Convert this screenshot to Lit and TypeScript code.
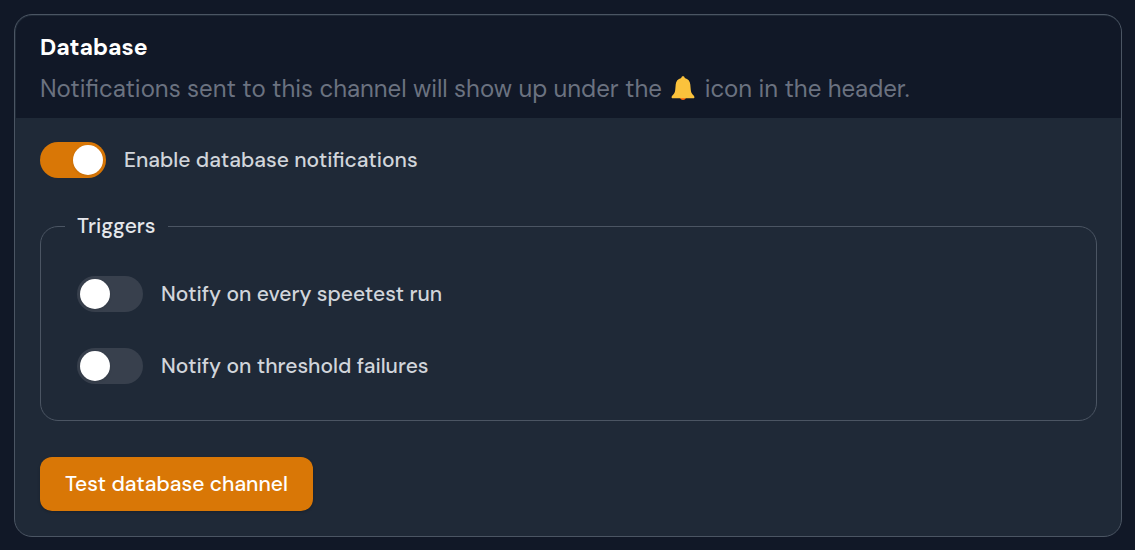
import { LitElement, html, css } from "lit";
import { customElement, property } from "lit/decorators.js";

@customElement("toggle-field")
class ToggleField extends LitElement {
  @property() label = "";
  @property({ type: Boolean }) checked = false;

  static styles = css`
    :host {
      display: block;
    }
    .field {
      display: flex;
      align-items: center;
      gap: 18px;
      min-height: 36px;
      color: #d1d5db;
      font-size: 21px;
      font-weight: 500;
      line-height: 30px;
      cursor: pointer;
    }
    .switch {
      appearance: none;
      box-sizing: border-box;
      display: flex;
      flex: none;
      width: 66px;
      height: 36px;
      margin: 0;
      padding: 3px;
      border-radius: 18px;
      background: #38404d;
      cursor: pointer;
    }
    .switch::before {
      content: "";
      width: 30px;
      height: 30px;
      border-radius: 50%;
      background: #fff;
      box-shadow: 0 1px 3px rgb(0 0 0 / 0.1);
    }
    .switch:checked {
      justify-content: flex-end;
      background: #d97706;
    }
    .switch:focus-visible {
      outline: 2px solid #f59e0b;
      outline-offset: 2px;
    }
  `;

  render() {
    return html`
      <label class="field">
        <input
          class="switch"
          type="checkbox"
          role="switch"
          .checked=${this.checked}
          @change=${(e: Event) => (this.checked = (e.target as HTMLInputElement).checked)}
        />
        <span>${this.label}</span>
      </label>
    `;
  }
}

@customElement("app-root")
class AppRoot extends LitElement {
  static styles = css`
    :host {
      display: block;
      box-sizing: border-box;
      min-height: 100vh;
      padding: 14px 13px 13px 14px;
      background: #111827;
      font-family: "DM Sans", Inter, sans-serif;
    }
    .card {
      padding: 1px 0 0 1px;
      border: 1px solid #4b5563;
      border-radius: 18px;
      background: #1f2937;
      overflow: hidden;
    }
    .header {
      display: grid;
      gap: 6px;
      padding: 13px 24px 11px;
      border-radius: 16px 16px 0 0;
      background: #111827;
    }
    .title,
    .description {
      margin: 0;
      line-height: 36px;
    }
    .title {
      color: #fff;
      font-size: 23px;
      font-weight: 700;
    }
    .description {
      color: #6b7280;
      font-size: 24px;
      font-weight: 400;
    }
    .bell {
      width: 28px;
      height: 24px;
      margin: 0 1px;
      vertical-align: -3px;
    }
    .body {
      display: grid;
      gap: 36px;
      padding: 24px 24px 25px;
    }
    .group {
      display: grid;
      gap: 36px;
      min-width: 0;
      margin: 0;
      padding: 37px 36px 36px;
      border: 1px solid #4b5563;
      border-radius: 18px;
    }
    .legend {
      margin-left: -12px;
      padding: 0 12px;
      color: #e5e7eb;
      font-size: 21px;
      font-weight: 500;
      line-height: 25px;
    }
    .test {
      justify-self: start;
      height: 54px;
      padding: 0 25px;
      border: 0;
      border-radius: 12px;
      background: #d97706;
      box-shadow: 0 1px 3px rgb(0 0 0 / 0.2);
      color: #fff;
      font: 500 21px/30px "DM Sans", Inter, sans-serif;
      cursor: pointer;
    }
  `;

  render() {
    return html`
      <section class="card">
        <header class="header">
          <h3 class="title">Database</h3>
          <p class="description">
            Notifications sent to this channel will show up under the
            <svg class="bell" viewBox="1 0 28 24" role="img" aria-label="bell">
              <path fill="#f7630c" d="M12 21h6c0 1.800-1.300 3-3 3s-3-1.200-3-3z" />
              <path
                fill="#fbc23c"
                d="M15 0.300c-1 0-1.700.700-1.700 1.600C9.800 2.700 8 5.200 7.700 8.500L7.200 14c-.2 2.200-.9 3.600-2.100 4.800C4 19.700 3.600 20.500 3.600 21.500c0 .4.300.7.700.7h21.400c.4 0 .7-.3.700-.7 0-1-.4-1.800-1.500-2.700-1.200-1.200-1.900-2.600-2.100-4.800l-.5-5.500c-.3-3.300-2.100-5.800-5.600-6.600 0-.9-.7-1.600-1.700-1.600z"
              />
            </svg>
            icon in the header.
          </p>
        </header>
        <div class="body">
          <toggle-field label="Enable database notifications" checked></toggle-field>
          <fieldset class="group">
            <legend class="legend">Triggers</legend>
            <toggle-field label="Notify on every speetest run"></toggle-field>
            <toggle-field label="Notify on threshold failures"></toggle-field>
          </fieldset>
          <button class="test" type="button">Test database channel</button>
        </div>
      </section>
    `;
  }
}
